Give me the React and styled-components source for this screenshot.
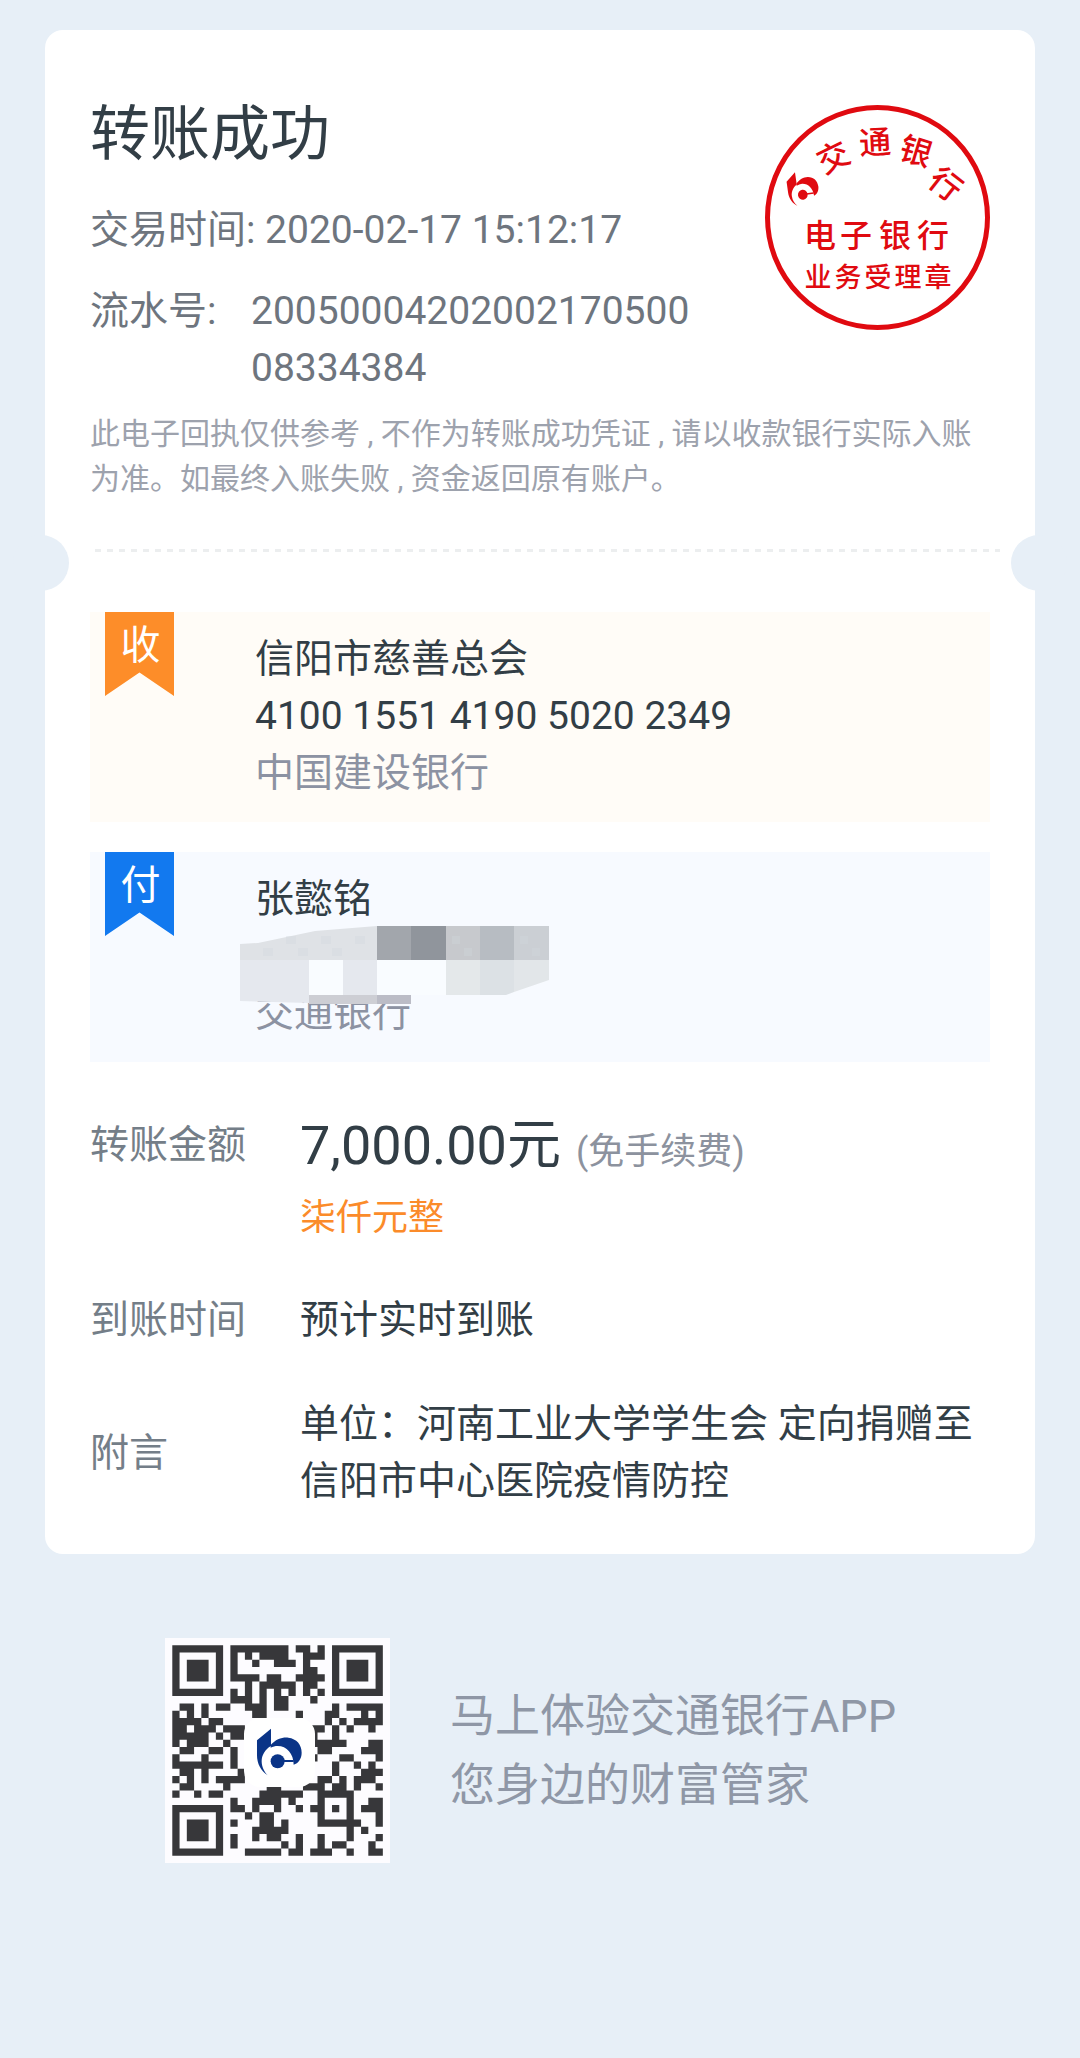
import styled, { createGlobalStyle } from 'styled-components';

const GlobalStyle = createGlobalStyle`
  body {
    margin: 0;
    background: #e7eff7;
    font-family: Roboto, 'Noto Sans CJK SC', sans-serif;
    color: #323e46;
  }
`;

const Page = styled.main`
  padding: 30px 45px 195px;
`;

const Card = styled.article`
  padding: 61px 45px 44px;
  border-radius: 18px;
  background: #fff;
`;

const Header = styled.header`
  display: flex;
  justify-content: space-between;
  align-items: flex-start;
`;

const Summary = styled.div`
  display: flex;
  flex-direction: column;
  gap: 24px;
`;

const Title = styled.h1`
  margin: 0;
  font-size: 60px;
  line-height: 87px;
  font-weight: 400;
`;

const Meta = styled.div`
  display: flex;
  font-size: 39px;
  line-height: 57px;
  color: #6e757e;
`;

const MetaLabel = styled.span`
  width: 161px;
`;

const Serial = styled.span`
  max-width: 450px;
  word-break: break-all;
`;

const SealImage = styled.svg`
  width: 225px;
  height: 225px;
  margin-top: 14px;
  fill: #e00a10;
`;

const Note = styled.p`
  margin: 14px 0 48px;
  font-size: 30px;
  line-height: 45px;
  color: #9da2ad;
`;

const Divider = styled.div`
  position: relative;
  height: 3px;
  margin: 0 -10px 60px 5px;
  background: repeating-linear-gradient(90deg, #eceeef 0 6px, transparent 6px 12px);
`;

const Notch = styled.span`
  position: absolute;
  top: -14px;
  ${({ $side }) => ($side === 'left' ? 'left: -82px;' : 'right: -67px;')}
  width: 56px;
  height: 56px;
  border-radius: 50%;
  background: #e7eff7;
`;

const Parties = styled.div`
  display: flex;
  flex-direction: column;
  gap: 30px;
`;

const Panel = styled.section`
  display: flex;
  align-items: flex-start;
  gap: 81px;
  min-height: 210px;
  padding: 0 15px;
  box-sizing: border-box;
  background: ${({ $tone }) => ($tone === 'orange' ? '#fffcf7' : '#f7faff')};
`;

const Ribbon = styled.div`
  width: 69px;
  height: 84px;
  padding-left: 2px;
  box-sizing: border-box;
  font-size: 40px;
  line-height: 68px;
  text-align: center;
  color: #fff;
  background: ${({ $tone }) => ($tone === 'orange' ? '#fd8d29' : '#1279ef')};
  clip-path: polygon(0 0, 100% 0, 100% 100%, 50% 72%, 0 100%);
`;

const PartyInfo = styled.div`
  position: relative;
  padding-top: 19px;
  font-size: 39px;
  line-height: 57px;
`;

const Line = styled.div`
  min-height: 57px;
  color: ${({ $muted }) => ($muted ? '#8c92a2' : 'inherit')};
`;

const MosaicImage = styled.svg`
  position: absolute;
  left: -15px;
  top: 74px;
  width: 309px;
  height: 78px;
`;

const Details = styled.dl`
  display: grid;
  grid-template-columns: 210px 1fr;
  row-gap: 47px;
  margin: 55px 0 0;
  font-size: 39px;
  line-height: 57px;
`;

const Term = styled.dt`
  align-self: ${({ $center }) => ($center ? 'center' : 'start')};
  color: #747e88;
`;

const Value = styled.dd`
  margin: 0;
`;

const Amount = styled.div`
  display: flex;
  align-items: baseline;
  gap: 15px;
  font-size: 54px;
`;

const Fee = styled.span`
  font-size: 36px;
  line-height: 36px;
  color: #8c929e;
`;

const AmountWords = styled.div`
  margin-top: 17px;
  font-size: 36px;
  line-height: 54px;
  color: #fb8b2a;
`;

const Footer = styled.footer`
  display: flex;
  align-items: center;
  gap: 60px;
  margin-top: 84px;
  padding-left: 120px;
`;

const QrImage = styled.svg`
  width: 225px;
  height: 225px;
`;

const Slogan = styled.p`
  margin: 0;
  font-size: 45px;
  line-height: 69px;
  color: #8f97a6;
`;

// dark columns of each row, top to bottom, without the three finder squares
const qrRows = [
  '8-15 17-18 20',
  '8 10 12-15 18-20',
  '8 11 14-16 18',
  '8 18-19',
  '8-11 13-14 17-20',
  '10 12-16 18-19',
  '8 10 12 14 16 18 20',
  '8-10 12 14-15 19',
  '1-2 4 6-7 10-12 14-15 22 24-28',
  '0 2 4 11-12 17 21-22 26 28',
  '0-3 5-6 21 23 25-28',
  '0-1 3-5 7-9 18-20 22 24 27',
  '0-4 6 8-9 19 22',
  '0 2-4 7 19-23 27-28',
  '1-2 5-6 8 20-21 26-28',
  '0 4 8 19 23-24 28',
  '0-6 8 22 25 27',
  '1-2 4 9 22 26-28',
  '0 2 4 6-9 20-21 23 25-27',
  '1-2 7 13-14 18-20 22-23 25 28',
  '0 3 5-6 12-17 20-24',
  '8 11-14 16 20 24 27-28',
  '8-9 11 14 17 19-20 22 24 26-28',
  '10 12-13 20 24 28',
  '8 12-13 15 20-25 28',
  '11-15 24 26',
  '8 11 13-14 17 20 24 28',
  '8 15 17 20 22-23 27',
  '10-14 16-17 19-21 24 27-28',
];

const qrPath = rows =>
  rows
    .flatMap((row, y) =>
      row.split(' ').map(run => {
        const [start, end = start] = run.split('-').map(Number);
        return `M${start} ${y}h${end - start + 1}v1H${start}z`;
      })
    )
    .join('');

const Logo = ({ color, ...props }) => (
  <g fill={color} {...props}>
    <path d="M306 345L348 310V362C330 372 320 390 320 408C320 425 328 440 338 450C318 438 306 415 306 390Z" />
    <path d="M347 359C362 342 382 335 400 337C425 340 440 358 440 382C440 400 430 414 416 418C416 385 395 362 368 362C360 362 354 364 347 367Z" />
    <circle cx="368" cy="408" r="21" />
    <path d="M368 404H416V410H368Z" />
  </g>
);

const arcChars = [
  { char: '交', x: 93, y: 77, angle: -26 },
  { char: '通', x: 135, y: 62, angle: -3 },
  { char: '银', x: 176, y: 71, angle: 17 },
  { char: '行', x: 206, y: 104, angle: 38 },
];

const Seal = () => (
  <SealImage viewBox="25 25 225 225" role="img" aria-label="交通银行电子银行业务受理章">
    <circle cx="137.5" cy="137.5" r="110" fill="none" stroke="#e00a10" strokeWidth="5" />
    <Logo color="#e00a10" transform="translate(63 108) rotate(-8) scale(0.23 0.24) translate(-373 -380)" />
    <g textAnchor="middle" fontWeight="500">
      {arcChars.map(({ char, x, y, angle }) => (
        <text key={char} fontSize="32" transform={`translate(${x} ${y}) rotate(${angle})`} y="12">
          {char}
        </text>
      ))}
      <text x="80 116 155 193" y="167" fontSize="32">电子银行</text>
      <text x="78 108 138 168 198" y="207" fontSize="27">业务受理章</text>
    </g>
  </SealImage>
);

const Mosaic = () => (
  <MosaicImage viewBox="0 0 309 78" aria-hidden="true">
    <path fill="#dfe2e6" d="M0 18L18 17L75 5L137 0V34H0z" />
    <path fill="#e5e8ee" d="M0 34H69V77L0 75z" />
    <path fill="#f9fcff" d="M69 34h34v35H69zM137 34h69v35h-69z" />
    <path fill="#e5e8ee" d="M103 34h34v35h-34z" />
    <path fill="#a2a6ac" d="M137 0h34v34h-34z" />
    <path fill="#90959c" d="M171 0h35v34h-35z" />
    <path fill="#c7c9cd" d="M206 0h34v34h-34z" />
    <path fill="#b7bcc2" d="M240 0h34v34h-34z" />
    <path fill="#cbcfd4" d="M274 0h35v34h-35z" />
    <path fill="#e4e8ea" d="M206 34h34v35h-34z" />
    <path fill="#dce1e5" d="M240 34h34v32l-8 3h-26z" />
    <path fill="#e2e6e9" d="M274 34h35v20l-35 12z" />
    <path fill="#cdced4" d="M69 69h68v9H69z" />
    <path fill="#bbbcc6" d="M137 69h34v9h-34z" />
    <path fill="#d2d6dc" opacity="0.35" d="M23 22h10v8H23zM46 10h10v8H46zM58 22h10v8H58zM81 10h10v8H81zM92 22h10v8H92zM115 10h10v8H115zM212 10h8v8h-8zM224 22h8v8h-8zM280 10h8v8h-8zM292 22h8v8h-8z" />
  </MosaicImage>
);

const Finder = ({ x, y }) => (
  <path d={`M${x} ${y}h7v7h-7zM${x + 1} ${y + 1}v5h5v-5zM${x + 2} ${y + 2}h3v3h-3z`} />
);

const QrCode = () => (
  <QrImage viewBox="0 0 225 225" role="img" aria-label="交通银行APP二维码">
    <rect width="225" height="225" fill="#fdfcff" />
    <g fill="#37373a" transform="translate(7.3 7.3) scale(7.26)">
      <Finder x={0} y={0} />
      <Finder x={22} y={0} />
      <Finder x={0} y={22} />
      <path d={qrPath(qrRows)} />
    </g>
    <rect x="79" y="80" width="71" height="69" rx="16" fill="#fff" />
    <Logo color="#0a3487" transform="scale(0.3333) translate(-30 -38)" />
  </QrImage>
);

const App = () => (
  <>
    <GlobalStyle />
    <Page lang="zh-CN">
      <Card>
        <Header>
          <Summary>
            <Title>转账成功</Title>
            <Meta>交易时间: 2020-02-17 15:12:17</Meta>
            <Meta>
              <MetaLabel>流水号:</MetaLabel>
              <Serial>2005000420200217050008334384</Serial>
            </Meta>
          </Summary>
          <Seal />
        </Header>
        <Note>
          此电子回执仅供参考 , 不作为转账成功凭证 , 请以收款银行实际入账为准。如最终入账失败 , 资金返回原有账户。
        </Note>
        <Divider>
          <Notch $side="left" />
          <Notch $side="right" />
        </Divider>
        <Parties>
          <Panel $tone="orange">
            <Ribbon $tone="orange">收</Ribbon>
            <PartyInfo>
              <Line>信阳市慈善总会</Line>
              <Line>4100 1551 4190 5020 2349</Line>
              <Line $muted>中国建设银行</Line>
            </PartyInfo>
          </Panel>
          <Panel $tone="blue">
            <Ribbon $tone="blue">付</Ribbon>
            <PartyInfo>
              <Line>张懿铭</Line>
              <Line />
              <Line $muted>交通银行</Line>
              <Mosaic />
            </PartyInfo>
          </Panel>
        </Parties>
        <Details>
          <Term>转账金额</Term>
          <Value>
            <Amount>
              7,000.00元<Fee>(免手续费)</Fee>
            </Amount>
            <AmountWords>柒仟元整</AmountWords>
          </Value>
          <Term>到账时间</Term>
          <Value>预计实时到账</Value>
          <Term $center>附言</Term>
          <Value>单位：河南工业大学学生会 定向捐赠至信阳市中心医院疫情防控</Value>
        </Details>
      </Card>
      <Footer>
        <QrCode />
        <Slogan>
          马上体验交通银行APP
          <br />
          您身边的财富管家
        </Slogan>
      </Footer>
    </Page>
  </>
);

export default App;
